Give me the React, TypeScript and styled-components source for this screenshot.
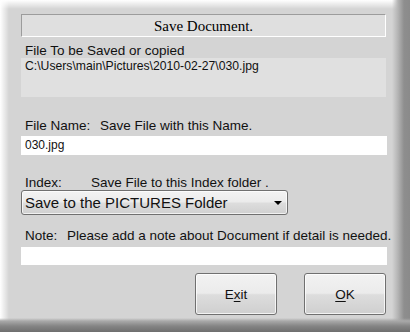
import styled, { createGlobalStyle } from "styled-components";

const GlobalStyle = createGlobalStyle`
  html, body {
    margin: 0;
    padding: 0;
    background: #d4d4d4;
  }
  * {
    box-sizing: border-box;
  }
`;

const Frame = styled.div`
  width: 410px;
  height: 332px;
  padding: 14px 24px 0 21px;
  display: flex;
  flex-direction: column;
  font-family: "Liberation Sans", Arial, sans-serif;
  color: #000;
  overflow: hidden;
  background:
    linear-gradient(to top, #6e6e6e 0px, #858585 6px, #a9a9a9 11px, rgba(212, 212, 212, 0) 14px),
    linear-gradient(to left, #8a8a8a 0px, #8e8e8e 6px, #b4b4b4 12px, rgba(212, 212, 212, 0) 18px),
    linear-gradient(to right, #ffffff 0px, rgba(255, 255, 255, 0) 9px),
    linear-gradient(to bottom, #ffffff 0px, rgba(255, 255, 255, 0) 9px),
    #d4d4d4;
`;

const TitleBar = styled.div`
  height: 23px;
  background: #dfdfdf;
  border-top: 1px solid #9c9c9c;
  border-left: 1px solid #9c9c9c;
  border-right: 1px solid #ffffff;
  border-bottom: 1px solid #ffffff;
  display: flex;
  align-items: center;
  justify-content: center;
  font-family: "Liberation Serif", "Times New Roman", serif;
  font-size: 15px;
  padding-top: 1px;
`;

const Label = styled.div<{ $gap: number }>`
  margin-top: ${(p) => p.$gap}px;
  padding-left: 4px;
  height: 15px;
  line-height: 15px;
  font-size: 13.5px;
  color: #111;
  display: flex;
  white-space: nowrap;
`;

const Key = styled.span<{ $width: number }>`
  width: ${(p) => p.$width}px;
  flex: none;
`;

const SourceBox = styled.div`
  height: 39px;
  background: #e0e0e0;
  padding: 1px 4px 0;
  font-size: 12.2px;
  line-height: 14px;
  color: #111;
`;

const Field = styled.div<{ $gap: number; $height: number }>`
  margin-top: ${(p) => p.$gap}px;
  height: ${(p) => p.$height}px;
  width: 366px;
  background: #ffffff;
  padding: 2px 4px 0;
  font-size: 12px;
  line-height: 14px;
  color: #111;
`;

const Select = styled.div`
  width: 267px;
  height: 25px;
  border: 1px solid #707070;
  border-radius: 3px;
  background: linear-gradient(to bottom, #f3f3f3 0%, #ebebeb 48%, #dddddd 52%, #d0d0d0 100%);
  box-shadow: inset 0 0 0 1px rgba(255, 255, 255, 0.7);
  display: flex;
  align-items: center;
  justify-content: space-between;
  padding: 0 5px 0 3px;
  font-size: 15px;
  color: #111;
`;

const Caret = styled.span`
  width: 0;
  height: 0;
  border-left: 4px solid transparent;
  border-right: 4px solid transparent;
  border-top: 4px solid #000;
  margin-top: 1px;
`;

const ButtonRow = styled.div`
  margin-top: 8px;
  display: flex;
  justify-content: flex-end;
  gap: 27px;
  padding-right: 0;
`;

const Button = styled.div<{ $width: number }>`
  width: ${(p) => p.$width}px;
  height: 42px;
  border: 1px solid #707070;
  border-radius: 3px;
  background: linear-gradient(to bottom, #f2f2f2 0%, #ebebeb 48%, #dddddd 52%, #cfcfcf 100%);
  box-shadow: inset 0 0 0 1px rgba(255, 255, 255, 0.75);
  display: flex;
  align-items: center;
  justify-content: center;
  font-size: 13.5px;
  color: #111;

  u {
    text-decoration-thickness: 1px;
    text-underline-offset: 2px;
  }
`;

export default function App() {
  return (
    <>
      <GlobalStyle />
      <Frame>
        <TitleBar>Save Document.</TitleBar>

        <Label $gap={6}>File To be Saved or copied</Label>
        <SourceBox>C:\Users\main\Pictures\2010-02-27\030.jpg</SourceBox>

        <Label $gap={21}>
          <Key $width={75}>File Name:</Key>
          <span>Save File with this Name.</span>
        </Label>
        <Field $gap={3} $height={19}>030.jpg</Field>

        <Label $gap={20}>
          <Key $width={66}>Index:</Key>
          <span>Save File to this Index folder .</span>
        </Label>
        <Select>
          <span>Save to the PICTURES Folder</span>
          <Caret />
        </Select>

        <Label $gap={13}>
          <Key $width={42}>Note:</Key>
          <span>Please add a note about Document if detail is needed.</span>
        </Label>
        <Field $gap={4} $height={18} />

        <ButtonRow>
          <Button $width={82}>
            <span>
              E<u>x</u>it
            </span>
          </Button>
          <Button $width={82}>
            <span>
              <u>O</u>K
            </span>
          </Button>
        </ButtonRow>
      </Frame>
    </>
  );
}
